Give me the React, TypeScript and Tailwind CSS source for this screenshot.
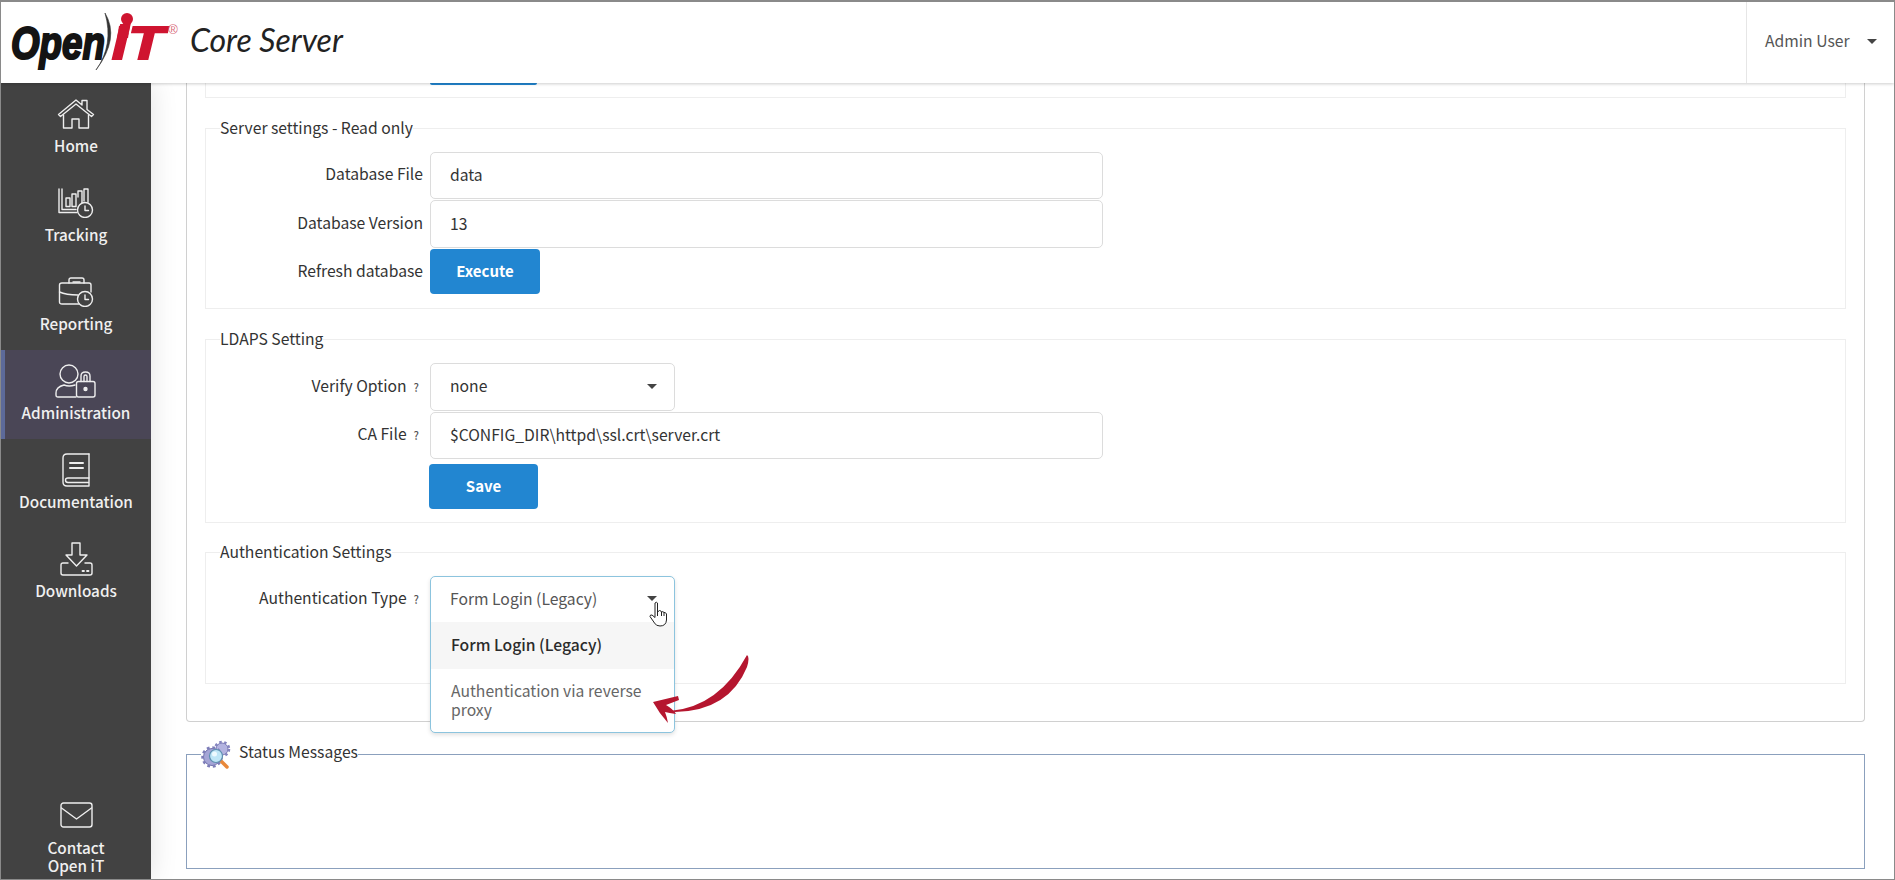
import React from 'react';

const iconStroke = { fill: 'none', stroke: '#eeeeee', strokeWidth: 1.4, strokeLinecap: 'round', strokeLinejoin: 'round' } as const;

const HomeIcon = () => (
  <svg width="38" height="32" viewBox="0 0 38 32" {...iconStroke}>
    <path d="M1.5 16.5 L19 2 L25 7 V2.5 H30 V11.5 L36.5 16.5 L34.5 18.5 L19 6 L3.5 18.5 Z" />
    <path d="M6.5 17 V30 H15 V21 H22 V30 H31.5 V17" />
  </svg>
);

const TrackingIcon = () => (
  <svg width="36" height="30" viewBox="0 0 36 30" {...iconStroke}>
    <path d="M1 1 V24.5 H19" />
    <path d="M4 1 V21.5 H18" />
    <path d="M8 10 h4 v8.5 h-4 z M14 6 h4 v12.500 h-4 z M20 3 h4 v12 M26 1 h4 v13 M20 3 v6 M26 1 v12" />
    <circle cx="27" cy="22" r="7.5" />
    <path d="M27 18 V22.5 H30.5" />
  </svg>
);

const ReportingIcon = () => (
  <svg width="36" height="30" viewBox="0 0 36 30" {...iconStroke}>
    <path d="M11 6 V3 Q11 1 13 1 H24 Q26 1 26 3 V6" />
    <path d="M15 5 H22" />
    <path d="M21 27 H4 Q1.5 27 1.5 25 V8 Q1.5 6 4 6 H31 Q33 6 33 8 V15" />
    <path d="M1.5 15 Q8 18 20 18" />
    <circle cx="27" cy="22" r="7.5" />
    <path d="M27 18 V22.5 H30.5" />
  </svg>
);

const AdminIcon = () => (
  <svg width="42" height="34" viewBox="0 0 42 34" {...iconStroke}>
    <circle cx="14" cy="10" r="9" />
    <path d="M21 33 H3 Q1 33 1 31 V29 Q1 23 9 21 Q14 23 20 21" />
    <rect x="21.5" y="17.5" width="18.5" height="15.500" rx="2" />
    <path d="M26 17.5 V12 Q26 8 30.5 8 Q35 8 35 12 V17.5" />
    <path d="M29 17.5 V12.500 Q29 11 30.5 11 Q32 11 32 12.500 V17.5" />
    <circle cx="30.5" cy="25" r="1.5" fill="#eeeeee" />
  </svg>
);

const DocumentationIcon = () => (
  <svg width="30" height="34" viewBox="0 0 30 34" {...iconStroke}>
    <path d="M28 1 H6 Q2 1 2 5 V29 Q2 33 6 33 H28 V25 H7 Q4.5 25 4.5 27 Q4.5 29.5 7 29.5 H27" />
    <path d="M28 1 V25" />
    <path d="M9 10 H22" strokeWidth="2" />
    <path d="M9 15 H22" strokeWidth="2" />
  </svg>
);

const DownloadsIcon = () => (
  <svg width="33" height="34" viewBox="0 0 33 34" {...iconStroke}>
    <path d="M12 1 H20 V13 H27 L16.5 24 L6 13 H12 Z" />
    <path d="M8 21 H3 Q1 21 1 23 V31 Q1 33 3 33 H30 Q32 33 32 31 V23 Q32 21 30 21 H25" />
    <path d="M22.5 29 H24 M27 29 H28.5" strokeWidth="1.8" />
  </svg>
);

const MailIcon = () => (
  <svg width="33" height="26" viewBox="0 0 33 26" {...iconStroke}>
    <rect x="1" y="1" width="31" height="24" rx="2.5" />
    <path d="M1.5 6 L16.5 17 L31.5 6" />
  </svg>
);

const Caret = () => <div className="h-0 w-0 border-x-[5px] border-t-[5px] border-x-transparent border-t-[#444444]" />;

// svg spans the whole header, so y here is page y minus the 2px top border
const Logo = () => (
  <svg width="180" height="81" viewBox="0 0 180 81" className="shrink-0">
    <text x="10" y="57" fontFamily="'Liberation Sans', sans-serif" fontWeight="700" fontStyle="italic" fontSize="47" textLength="94" lengthAdjust="spacingAndGlyphs" fill="#141414" stroke="#141414" strokeWidth="2.2">
      Open
    </text>
    <path d="M104 11 Q119 36 95 68 Q113 43 104 11 Z" fill="#333333" stroke="#333333" strokeWidth="0.6" />
    <text x="111" y="57" fontFamily="'Liberation Sans', sans-serif" fontWeight="700" fontStyle="italic" fontSize="47" textLength="52" lengthAdjust="spacingAndGlyphs" fill="#cf1430" stroke="#cf1430" strokeWidth="2">
      iT
    </text>
    <path d="M118 24 L129 24 L127 36 L116 36 Z" fill="#cf1430" />
    <circle cx="126" cy="17" r="6" fill="#cf1430" />
    <text x="172" y="32" fontFamily="'Liberation Sans', sans-serif" fontSize="13" fill="#d96a7a" textAnchor="middle">
      ®
    </text>
  </svg>
);

const navItems = [
  { label: 'Home', icon: <HomeIcon /> },
  { label: 'Tracking', icon: <TrackingIcon /> },
  { label: 'Reporting', icon: <ReportingIcon /> },
  { label: 'Administration', icon: <AdminIcon />, active: true },
  { label: 'Documentation', icon: <DocumentationIcon /> },
  { label: 'Downloads', icon: <DownloadsIcon /> },
];

const Sidebar = () => (
  <aside className="z-10 flex w-[150px] shrink-0 flex-col bg-[#424242] text-[15.3px] font-medium text-[#f0f0f0] shadow-[0_0_26px_rgba(0,0,0,0.12)]">
    {navItems.map(item => (
      <div
        key={item.label}
        className={`flex h-[89px] flex-col items-center pt-[12px] ${item.active ? 'border-l-4 border-[#5d6a9a] bg-[#4a4656] pr-1' : ''}`}
      >
        <div className="flex h-[38px] items-center justify-center">{item.icon}</div>
        <div className="leading-6">{item.label}</div>
      </div>
    ))}
    <div className="mt-auto flex flex-col items-center pb-[5px] text-center leading-[18px]">
      <MailIcon />
      <div className="mt-[10px]">
        Contact
        <br />
        Open iT
      </div>
    </div>
  </aside>
);

const Label = ({ text, help, className = 'pb-[3px]' }: { text: string; help?: boolean; className?: string }) => (
  <div className={`flex w-[217px] shrink-0 items-center justify-end text-[15.7px] whitespace-nowrap ${help ? 'pr-[4px]' : ''} ${className}`}>
    {text}
    {help && <span className="mt-[3px] ml-[7px] text-[11px] font-medium text-[#555555]">?</span>}
  </div>
);

const TextRow = ({ label, value, help, height, labelClass }: { label: string; value: string; help?: boolean; height: string; labelClass?: string }) => (
  <div className="flex items-stretch gap-[7px]">
    <Label text={label} help={help} className={labelClass} />
    <input
      readOnly
      value={value}
      className={`w-[673px] rounded-[5px] border border-[#dcdcdc] bg-white px-[19px] pb-[2px] text-[15.7px] text-[#333333] outline-none ${height}`}
    />
  </div>
);

const BlueButton = ({ children, width }: { children: React.ReactNode; width: string }) => (
  <button className={`flex h-[45px] items-center justify-center rounded-[4px] bg-[#2286d1] text-[15px] font-bold text-white ${width}`}>
    {children}
  </button>
);

const Section = ({ title, className, children }: { title: string; className: string; children: React.ReactNode }) => (
  <fieldset className={`border border-[#eeeeee] ${className}`}>
    <legend className="ml-[14px] text-[15.7px] leading-6 text-[#333333]">{title}</legend>
    {children}
  </fieldset>
);

const HandCursor = () => (
  <svg width="19" height="26" viewBox="0 0 19 26" className="absolute top-[25px] left-[219px]" fill="#ffffff" stroke="#222222" strokeWidth="1" strokeLinejoin="round">
    <path d="M6 2 Q7.5 .5 8.5 2 V11 L10.5 9.5 Q12 9.5 12.5 11 Q14 10 15 11.5 Q16.5 11 17.5 13 V19 Q17 25 11 25 Q7 25 5.5 22 L1 15.5 Q1 13.5 3 14 L6 16.5 Z" />
    <path d="M8.5 11 V15 M12.5 11 V15 M15 11.5 V15" fill="none" />
  </svg>
);

const RedArrow = () => (
  <svg width="112" height="76" viewBox="0 0 112 76" className="pointer-events-none absolute top-[79px] left-[217px]" fill="#b5162f">
    <path d="M100 0 Q103 2 100 12 Q82 56 28 57 L23 56 Q72 52 100 0 Z" />
    <path d="M6 47 L31 41 L32 45 L19 50 Q26 54 29 59 Q22 58 18 57 Q20 62 21 68 Q12 58 6 47 Z" />
  </svg>
);

const AuthSelect = () => (
  <div className="relative h-[46px] w-[245px]">
    {/* covered by the open menu except for its left edge */}
    <div className="absolute top-[53px] left-0 h-[40px] w-[100px] rounded-[4px] bg-[#2286d1]" />
    <div className="absolute top-0 left-0 z-10 w-[245px] rounded-[5px] border border-[#8cc4de] bg-white shadow-[0_2px_4px_rgba(0,0,0,0.12)]">
      <div className="flex h-[45px] items-center justify-between pr-[17px] pb-[2px] pl-[19px] text-[15.7px] text-[#555555]">
        Form Login (Legacy)
        <Caret />
      </div>
      <div className="flex h-[47px] items-center bg-[#f6f6f6] pb-[1px] pl-[20px] text-[15.7px] font-medium text-[#2b2b2b]">Form Login (Legacy)</div>
      <div className="h-[63px] px-[20px] pt-[12px] text-[15.7px] leading-[19px] text-[#666666]">Authentication via reverse proxy</div>
    </div>
    <div className="absolute top-0 left-0 z-20 h-0 w-0">
      <HandCursor />
      <RedArrow />
    </div>
  </div>
);

const GearsIcon = () => (
  <svg width="30" height="29" viewBox="0 0 30 29" className="shrink-0">
    <circle cx="21" cy="9" r="6" fill="#b3b3e0" stroke="#7b7bb5" strokeWidth="1" />
    <circle cx="21" cy="9" r="7" fill="none" stroke="#8484bf" strokeWidth="2.5" strokeDasharray="2.5 2.5" />
    <circle cx="11" cy="17" r="8.5" fill="#a5a5d6" stroke="#7272ad" strokeWidth="1" />
    <circle cx="11" cy="17" r="9.5" fill="none" stroke="#7d7db8" strokeWidth="2.5" strokeDasharray="2.8 2.8" />
    <path d="M19 20 L26 27" stroke="#e8883a" strokeWidth="3.5" strokeLinecap="round" />
    <circle cx="15" cy="16" r="6.5" fill="#bfe6f7" stroke="#5d8fb0" strokeWidth="1.2" />
    <circle cx="13.5" cy="14" r="2.5" fill="#eefaff" />
  </svg>
);

const App: React.FC = () => {
  return (
    <div className="flex h-screen flex-col overflow-hidden border border-t-2 border-[#8a8a8a] bg-white font-['Noto_Sans_CJK_SC',sans-serif] text-[#333333]">
      {/* Header */}
      <header className="z-20 flex h-[81px] shrink-0 items-center justify-between bg-white shadow-[0_1px_3px_rgba(0,0,0,0.2)]">
        <div className="flex items-center">
          <Logo />
          <span className="mb-[6px] ml-[9px] font-['Lato',sans-serif] text-[32px] text-[#222222] italic">Core Server</span>
        </div>
        <div className="flex h-full w-[148px] items-center gap-[17px] border-l border-[#e6e6e6] pb-[3px] pl-[18px] text-[15.7px] text-[#555555]">
          Admin User
          <Caret />
        </div>
      </header>

      <div className="flex min-h-0 flex-1">
        <Sidebar />

        {/* Main Content */}
        <main className="min-w-0 flex-1 pr-[29px] pl-[35px]">
          <div className="rounded-b-[4px] border-x border-b border-[#d0d0d0] px-[18px] pb-[37px]">
            {/* tail of the section scrolled under the header */}
            <div className="h-[15px] border-x border-b border-[#eeeeee] pl-[224px]">
              <div className="h-[2px] w-[107px] rounded-b-[3px] bg-[#2286d1]" />
            </div>

            <Section title="Server settings - Read only" className="mt-[18px] pt-[12px] pb-[14px]">
              <TextRow label="Database File" value="data" height="h-[47px]" />
              <div className="h-[1px]" />
              <TextRow label="Database Version" value="13" height="h-[48px]" labelClass="pb-[2px]" />
              <div className="mt-[1px] flex items-center gap-[7px]">
                <Label text="Refresh database" className="pb-[1px]" />
                <BlueButton width="w-[110px]">Execute</BlueButton>
              </div>
            </Section>

            <Section title="LDAPS Setting" className="mt-[18px] pt-[12px] pb-[13px]">
              <div className="flex items-stretch gap-[7px]">
                <Label text="Verify Option" help />
                <div className="flex h-[48px] w-[245px] items-center justify-between rounded-[5px] border border-[#dcdcdc] pr-[17px] pb-[2px] pl-[19px] text-[15.7px]">
                  none
                  <Caret />
                </div>
              </div>
              <div className="mt-[1px]">
                <TextRow label="CA File" value="$CONFIG_DIR\httpd\ssl.crt\server.crt" help height="h-[47px]" />
              </div>
              <div className="mt-[5px] ml-[223px]">
                <BlueButton width="w-[109px]">Save</BlueButton>
              </div>
            </Section>

            <Section title="Authentication Settings" className="mt-[17px] h-[144px] pt-[12px]">
              <div className="flex items-stretch gap-[7px]">
                <div className="flex h-[46px] items-center">
                  <Label text="Authentication Type" help />
                </div>
                <AuthSelect />
              </div>
            </Section>
          </div>

          <fieldset className="mt-[18px] h-[129px] border border-[#8ba0bd]">
            <legend className="ml-[14px] flex h-[28px] items-start gap-[8px] text-[15.7px] leading-[24px]">
              <GearsIcon />
              Status Messages
            </legend>
          </fieldset>
        </main>
      </div>
    </div>
  );
};

export default App;
